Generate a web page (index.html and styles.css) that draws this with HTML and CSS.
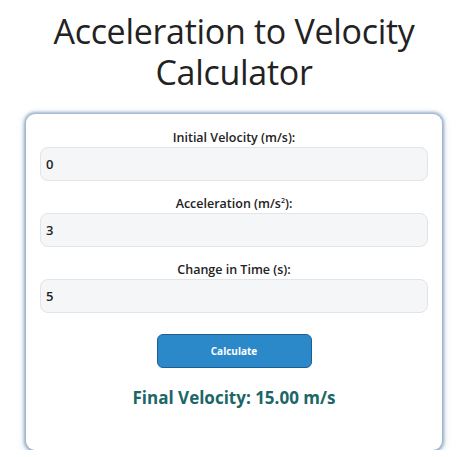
FILE: index.html
```html
<!DOCTYPE html>
<html lang="en">
<head>
    <meta charset="UTF-8">
    <meta name="viewport" content="width=device-width, initial-scale=1.0">
    <title>Acceleration to Velocity Calculator</title>
    <link rel="stylesheet" href="styles.css">
</head>
<body>
    <h1>Acceleration to Velocity Calculator</h1>

    <main class="calculator">
        <form class="calc-form">
            <label for="initial">Initial Velocity (m/s):</label>
            <input type="number" id="initial" value="0">

            <label for="accel">Acceleration (m/s<sup>2</sup>):</label>
            <input type="number" id="accel" value="3">

            <label for="time">Change in Time (s):</label>
            <input type="number" id="time" value="5">

            <button type="button" class="calc-btn">Calculate</button>
        </form>

        <p class="result">Final Velocity: 15.00 m/s</p>
    </main>
</body>
</html>
```

FILE: styles.css
```css
/* Base */
body {
    font-family: "Open Sans", "Noto Sans", Arial, sans-serif;
    margin: 0;
    padding: 0 32px 0 26px;
    background-color: #ffffff;
    color: #222222;
}

h1 {
    font-weight: 400;
    font-size: 34px;
    line-height: 41px;
    text-align: center;
    margin: 11px 0 21px;
    color: #222222;
    letter-spacing: -0.3px;
}

/* Card */
.calculator {
    background-color: #ffffff;
    border-radius: 9px;
    box-shadow: 0 0 3px 2px rgba(90, 125, 170, 0.55), 0 2px 8px rgba(60, 100, 150, 0.35);
    padding: 15px 14px 40px;
    width: 388px;
    margin: 0 auto;
}

.calc-form {
    display: flex;
    flex-direction: column;
}

label {
    font-size: 12.5px;
    font-weight: 600;
    text-align: center;
    line-height: 18px;
    color: #222222;
}

label sup {
    font-size: 7px;
    line-height: 0;
}

input[type="number"] {
    height: 34px;
    box-sizing: border-box;
    border: 1px solid #e2e4e8;
    border-radius: 8px;
    background-color: #f5f6f8;
    padding: 0 5px;
    font-family: inherit;
    font-size: 13px;
    font-weight: 600;
    color: #222222;
    margin-bottom: 14px;
    -moz-appearance: textfield;
}

input::-webkit-outer-spin-button,
input::-webkit-inner-spin-button {
    -webkit-appearance: none;
    margin: 0;
}

.calc-btn {
    align-self: center;
    width: 155px;
    height: 34px;
    margin-top: 7px;
    background-color: #2b89c9;
    border: 1px solid #1d5f95;
    border-radius: 6px;
    color: #ffffff;
    font-family: inherit;
    font-size: 10px;
    font-weight: 700;
    cursor: pointer;
}

.result {
    text-align: center;
    font-size: 17px;
    line-height: 25px;
    font-weight: 700;
    color: #1b6667;
    margin: 17px 0 0;
}
```
